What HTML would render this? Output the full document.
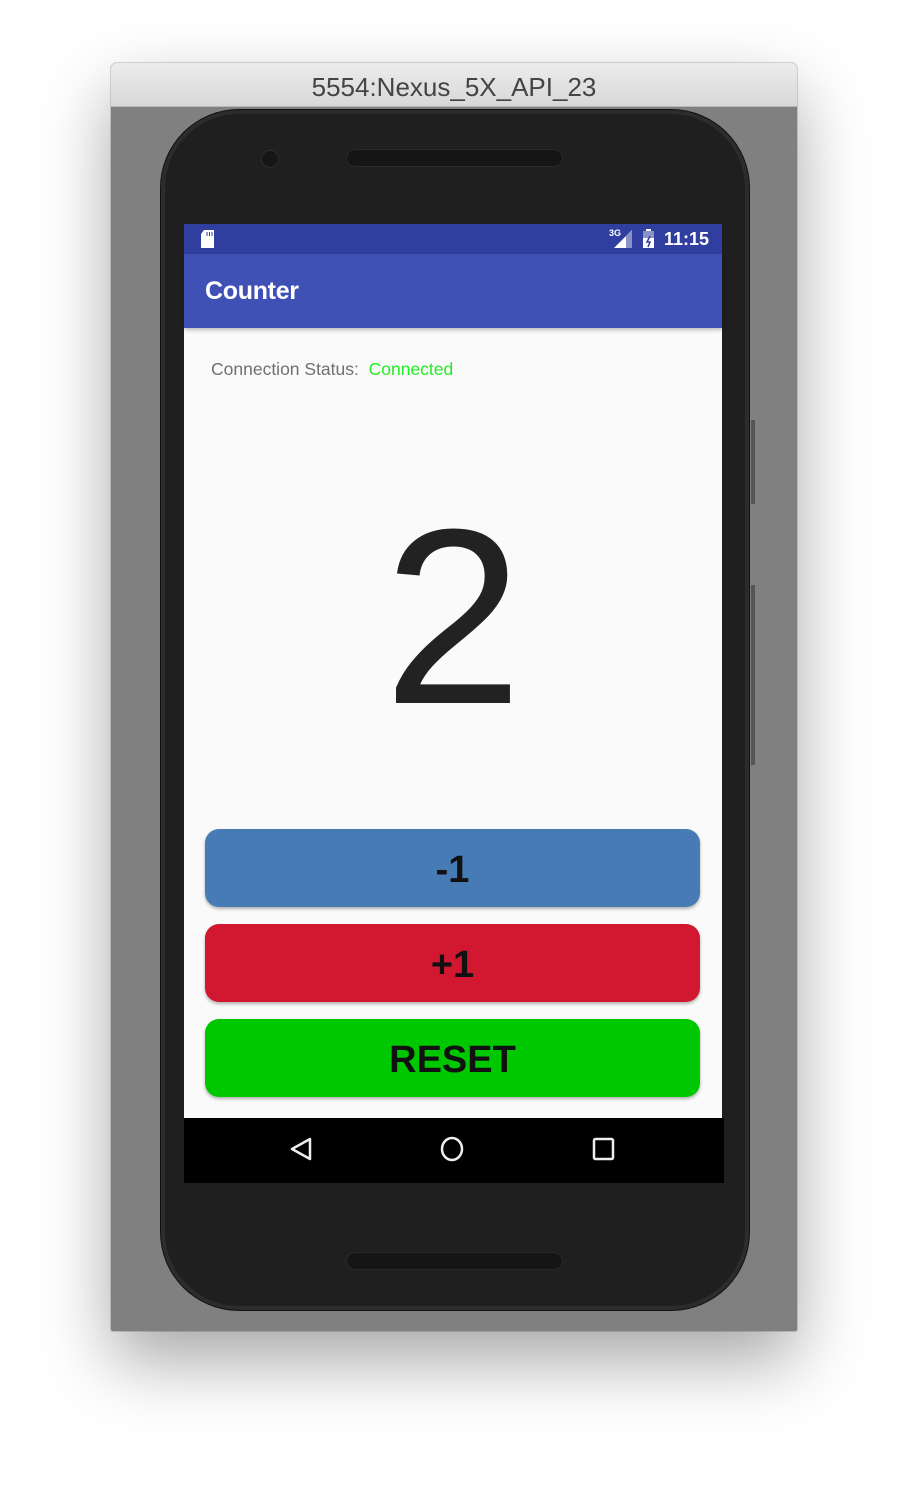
<!DOCTYPE html>
<html><head><meta charset="utf-8"><style>
*{margin:0;padding:0;box-sizing:border-box}
body{width:908px;height:1490px;background:#fff;position:relative;overflow:hidden;font-family:"Liberation Sans",sans-serif}
.win{position:absolute;left:111px;top:63px;width:686px;height:1268px;background:#808080;border-radius:6px 6px 2px 2px;box-shadow:0 30px 70px rgba(0,0,0,.35),0 0 0 1px rgba(0,0,0,.15);overflow:hidden}
.title{position:absolute;left:0;top:0;width:686px;height:44px;background:linear-gradient(#ececec,#d8d8d8);border-bottom:1px solid #b8b8b8;text-align:center;font-size:26px;line-height:48px;color:#444}
.phone{position:absolute;left:161px;top:110px;width:588px;height:1200px;background:#1f1f1f;border-radius:78px;border:4px solid #2c2c2c;box-shadow:0 0 0 1px #111}
.sp{position:absolute;height:18px;border-radius:9px;background:#151515;border:1px solid #2a2a2a}
.abs{position:absolute}
.btn{position:absolute;left:205px;width:495px;height:78px;border-radius:14px;text-align:center;font-size:38px;font-weight:bold;line-height:82px;color:#111;box-shadow:0 2px 3px rgba(0,0,0,.3)}
</style></head><body>
<div class="win"><div class="title">5554:Nexus_5X_API_23</div></div>
<div class="phone"></div>
<div class="abs" style="left:261px;top:150px;width:18px;height:18px;border-radius:50%;background:#161616;border:1px solid #2c2c2c"></div>
<div class="sp" style="left:346px;top:149px;width:217px"></div>
<div class="sp" style="left:346px;top:1252px;width:217px"></div>
<div class="abs" style="left:751px;top:420px;width:4px;height:84px;background:#555"></div>
<div class="abs" style="left:751px;top:585px;width:4px;height:180px;background:#555"></div>
<div class="abs" style="left:184px;top:224px;width:538px;height:894px;background:#fafafa"></div>
<div class="abs" style="left:184px;top:224px;width:538px;height:30px;background:#303f9f"></div>
<svg class="abs" style="left:199px;top:229px" width="18" height="20"><path d="M5 1H15V19H2V5Z" fill="#fff"/><path d="M8 3v4M10.5 3v4M13 3v4" stroke="#303f9f" stroke-width="1"/></svg>
<div class="abs" style="left:609px;top:228px;font-size:9px;color:#fff;font-weight:bold">3G</div>
<svg class="abs" style="left:612px;top:229px" width="22" height="20"><path d="M20 1V19H2Z" fill="#fff"/><path d="M20 1V19H14V7Z" fill="#8a93c8"/></svg>
<svg class="abs" style="left:642px;top:228px" width="14" height="22"><rect x="1" y="3" width="11" height="17" fill="#fff"/><rect x="4" y="1" width="5" height="2" fill="#fff"/><rect x="1" y="3" width="11" height="7" fill="#8a93c8"/><path d="M8 8l-3 6h3l-2 5" stroke="#303f9f" stroke-width="1.5" fill="none"/></svg>
<div class="abs" style="left:664px;top:229px;font-size:18px;color:#fff;font-weight:bold">11:15</div>
<div class="abs" style="left:184px;top:254px;width:538px;height:74px;background:#3f51b5;box-shadow:0 2px 4px rgba(0,0,0,.25)"></div>
<div class="abs" style="left:205px;top:277px;font-size:25px;color:#fff;font-weight:bold;letter-spacing:-0.3px">Counter</div>
<div class="abs" style="left:211px;top:359px;font-size:17.5px;color:#707070">Connection Status:&nbsp; <span style="color:#22ee22">Connected</span></div>
<div class="abs" style="left:184px;top:467px;width:538px;text-align:center;font-size:250px;line-height:300px;color:#222">2</div>
<div class="btn" style="top:829px;background:#477bb6">-1</div>
<div class="btn" style="top:924px;background:#d21730">+1</div>
<div class="btn" style="top:1019px;background:#00c800">RESET</div>
<div class="abs" style="left:184px;top:1118px;width:540px;height:65px;background:#000"></div>
<svg class="abs" style="left:184px;top:1118px" width="540" height="65"><path d="M126 21L108 31L126 41Z" fill="none" stroke="#eee" stroke-width="2.5" stroke-linejoin="round"/><ellipse cx="268" cy="31" rx="10" ry="11" fill="none" stroke="#eee" stroke-width="2.5"/><rect x="410" y="21" width="19" height="20" rx="1.5" fill="none" stroke="#eee" stroke-width="2.5"/></svg>
</body></html>
